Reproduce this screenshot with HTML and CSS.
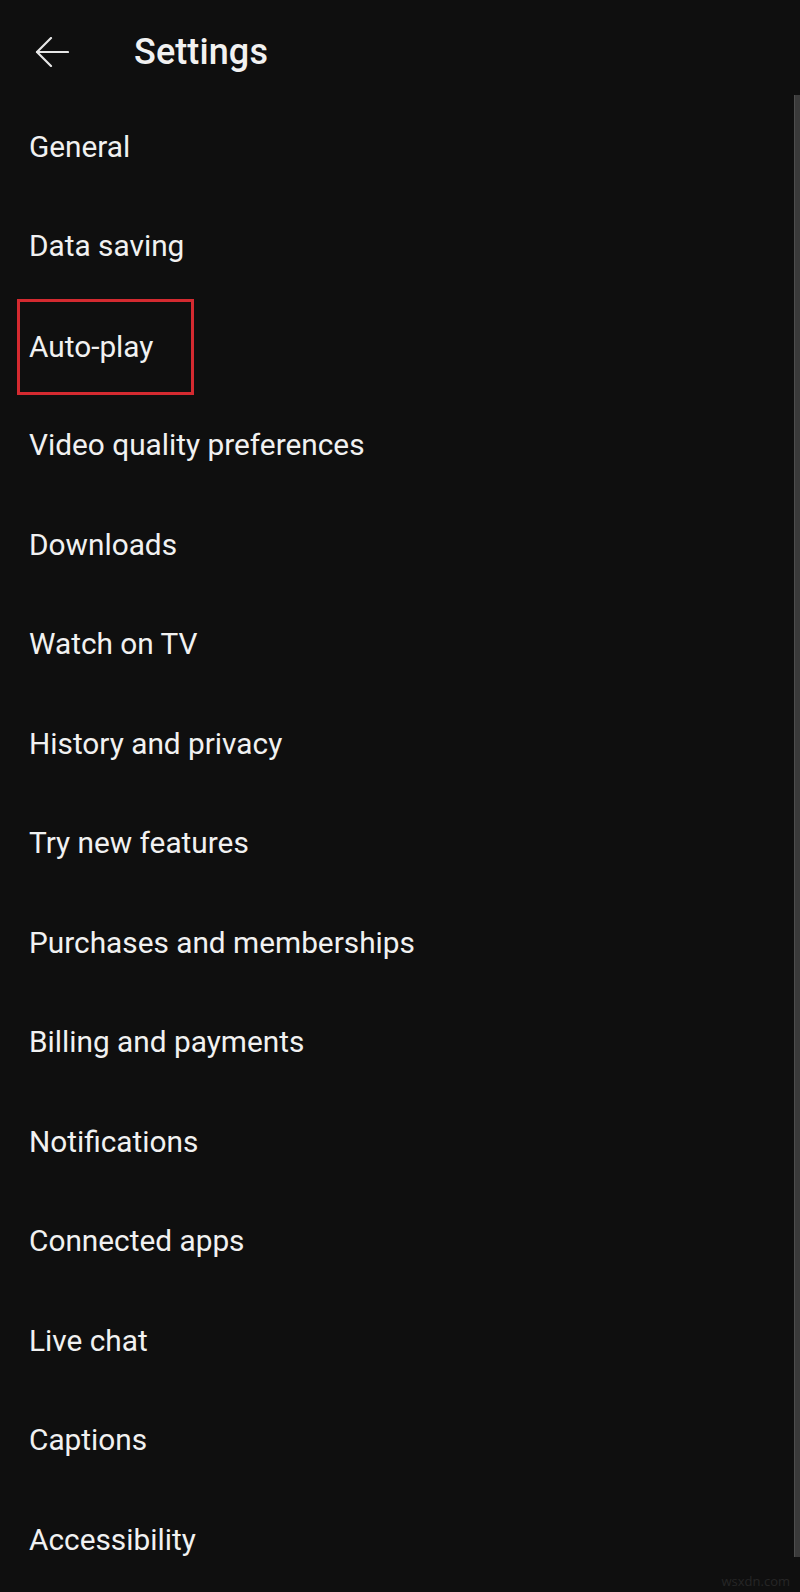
FILE: index.html
```html
<!DOCTYPE html>
<html lang="en">
<head>
<meta charset="utf-8">
<title>Settings</title>
<link rel="stylesheet" href="styles.css">
</head>
<body>
<div class="screen">
  <header class="topbar">
    <span class="back">
      <svg width="34" height="30" viewBox="0 0 34 30" fill="none" stroke="#e6e6e6" stroke-width="2.2" stroke-linecap="round" stroke-linejoin="round">
        <path d="M2 15 H33"/>
        <path d="M16 1 L2 15 L16 29"/>
      </svg>
    </span>
    <h1 class="title">Settings</h1>
  </header>
  <ul class="menu">
    <li class="item">General</li>
    <li class="item">Data saving</li>
    <li class="item"><span class="highlight">Auto-play</span></li>
    <li class="item">Video quality preferences</li>
    <li class="item">Downloads</li>
    <li class="item">Watch on TV</li>
    <li class="item">History and privacy</li>
    <li class="item">Try new features</li>
    <li class="item">Purchases and memberships</li>
    <li class="item">Billing and payments</li>
    <li class="item">Notifications</li>
    <li class="item">Connected apps</li>
    <li class="item">Live chat</li>
    <li class="item">Captions</li>
    <li class="item">Accessibility</li>
  </ul>
  <div class="scrollbar"></div>
  <div class="watermark">wsxdn.com</div>
</div>
</body>
</html>
```
FILE: styles.css
```css
html, body {
  margin: 0;
  padding: 0;
  background: #0f0f0f;
}
.screen {
  position: relative;
  width: 800px;
  height: 1592px;
  overflow: hidden;
  background: #0f0f0f;
  font-family: Roboto, "Noto Sans", "Liberation Sans", sans-serif;
  color: #f1f1f1;
}
.topbar {
  height: 97px;
  display: flex;
  align-items: center;
  box-sizing: border-box;
  padding-left: 35px;
  padding-top: 6px;
}
.back {
  display: flex;
  width: 34px;
  height: 30px;
  margin-right: 65px;
}
.title {
  margin: 0;
  font-size: 36px;
  font-weight: 500;
  letter-spacing: 0.1px;
  color: #f1f1f1;
  line-height: 1;
}
.menu {
  list-style: none;
  margin: 0;
  padding: 0;
}
.item {
  height: 99.5px;
  display: flex;
  align-items: center;
  padding-left: 29px;
  font-size: 29.8px;
  line-height: 1;
}
.highlight {
  display: inline-flex;
  align-items: center;
  margin-left: -12px;
  margin-top: 3px;
  padding: 0 38px 0 9px;
  height: 90px;
  border: 3px solid #d42a30;
}
.scrollbar {
  position: absolute;
  right: 0;
  top: 95px;
  width: 5px;
  height: 1462px;
  background: #3a3a3a;
  border-left: 1px solid #4e4e4e;
}
.watermark {
  position: absolute;
  right: 10px;
  bottom: 2px;
  font-family: "Open Sans", "Liberation Sans", sans-serif;
  font-size: 13px;
  color: #262626;
}
```
